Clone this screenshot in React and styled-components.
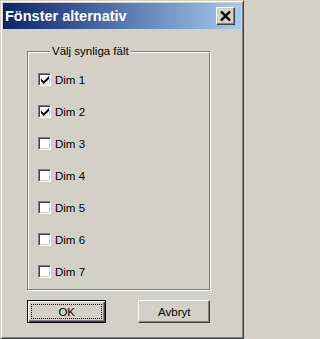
import React from 'react';
import styled, { createGlobalStyle, css } from 'styled-components';

const GlobalStyle = createGlobalStyle`
  html, body {
    margin: 0;
    padding: 0;
    background: #d4d0c8;
  }
`;

const Window = styled.div`
  box-sizing: border-box;
  width: 244px;
  height: 339px;
  display: flex;
  flex-direction: column;
  background: #d4d0c8;
  border: 1px solid;
  border-color: #d4d0c8 #404040 #404040 #d4d0c8;
  box-shadow: inset 1px 1px 0 #fff, inset -1px -1px 0 #808080;
  padding: 2px;
  font-family: "Liberation Sans", Arial, sans-serif;
`;

const TitleBar = styled.div`
  height: 26px;
  flex: none;
  display: flex;
  align-items: center;
  justify-content: space-between;
  padding: 0 6px 0 2px;
  background: linear-gradient(to right, #0a246a, #a6caf0);
`;

const Title = styled.span`
  color: #fff;
  font-weight: bold;
  font-size: 14.5px;
`;

const CloseButton = styled.button`
  box-sizing: border-box;
  width: 19px;
  height: 18px;
  padding: 0;
  display: flex;
  align-items: center;
  justify-content: center;
  background: #d4d0c8;
  border: 1px solid;
  border-color: #fff #404040 #404040 #fff;
  box-shadow: inset -1px -1px 0 #808080;
`;

const Content = styled.div`
  display: flex;
  flex-direction: column;
  padding: 16px 31px 0 24px;
`;

const Group = styled.fieldset`
  margin: 0;
  padding: 15px 10px 11px;
  border: 1px solid #808080;
  box-shadow: 1px 1px 0 #fff, inset 1px 1px 0 #fff;
`;

const Legend = styled.legend`
  margin-left: 12px;
  padding: 0 2px;
  font-size: 11.5px;
  line-height: 13px;
  color: #000;
  background: #d4d0c8;
`;

const CheckList = styled.div`
  display: flex;
  flex-direction: column;
  gap: 19px;
`;

const Row = styled.label`
  display: flex;
  align-items: center;
  gap: 4px;
  height: 13px;
  font-size: 11.5px;
  color: #000;
`;

const Box = styled.span`
  box-sizing: border-box;
  width: 13px;
  height: 13px;
  display: flex;
  align-items: center;
  justify-content: center;
  background: #fff;
  border: 1px solid;
  border-color: #808080 #fff #fff #808080;
  box-shadow: inset 1px 1px 0 #404040, inset -1px -1px 0 #d4d0c8;
`;

const Buttons = styled.div`
  display: flex;
  gap: 32px;
  margin-top: 10px;
`;

const Button = styled.button`
  box-sizing: border-box;
  width: ${(p) => p.$width}px;
  height: 23px;
  padding: 0;
  display: flex;
  align-items: center;
  justify-content: center;
  font-family: "Liberation Sans", Arial, sans-serif;
  font-size: 11.5px;
  color: #000;
  background: #d4d0c8;
  border: 1px solid;
  border-color: #fff #404040 #404040 #fff;
  box-shadow: inset -1px -1px 0 #808080;
  ${(p) => p.$default && css`
    border: 1px solid #000;
    box-shadow: inset 1px 1px 0 #fff, inset -1px -1px 0 #404040, inset -2px -2px 0 #808080;
  `}
`;

const Focus = styled.span`
  align-self: stretch;
  flex: 1;
  margin: 3px;
  border: 1px dotted #000;
  display: flex;
  align-items: center;
  justify-content: center;
`;

const Check = () => (
  <svg width="8" height="8" viewBox="0 0 7 7">
    <polygon points="0,2.2 2.4,4.5 7,0 7,2.6 2.4,7 0,4.6" fill="#000" />
  </svg>
);

const fields = [
  { name: 'Dim 1', checked: true },
  { name: 'Dim 2', checked: true },
  { name: 'Dim 3', checked: false },
  { name: 'Dim 4', checked: false },
  { name: 'Dim 5', checked: false },
  { name: 'Dim 6', checked: false },
  { name: 'Dim 7', checked: false },
];

const App = () => (
  <>
    <GlobalStyle />
    <Window>
      <TitleBar>
        <Title>Fönster alternativ</Title>
        <CloseButton>
          <svg width="11" height="10" viewBox="0 0 11 10">
            <path d="M1 0.5 L10 9.5 M10 0.5 L1 9.5" stroke="#000" strokeWidth="2.4" />
          </svg>
        </CloseButton>
      </TitleBar>
      <Content>
        <Group>
          <Legend>Välj synliga fält</Legend>
          <CheckList>
            {fields.map((field) => (
              <Row key={field.name}>
                <Box>{field.checked && <Check />}</Box>
                {field.name}
              </Row>
            ))}
          </CheckList>
        </Group>
        <Buttons>
          <Button $width={80} $default>
            <Focus>OK</Focus>
          </Button>
          <Button $width={72}>Avbryt</Button>
        </Buttons>
      </Content>
    </Window>
  </>
);

export default App;
